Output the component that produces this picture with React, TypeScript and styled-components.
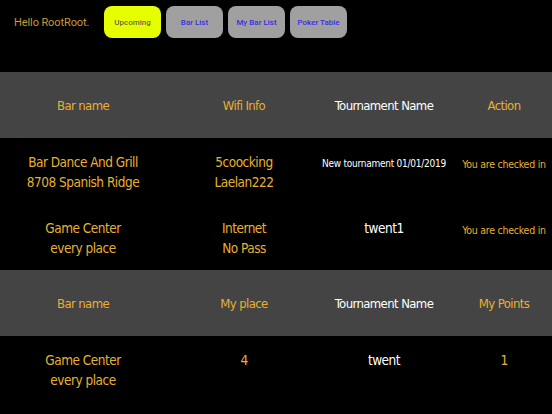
import React from 'react';
import styled, { createGlobalStyle } from 'styled-components';

const GlobalStyle = createGlobalStyle`
  html, body {
    margin: 0;
    padding: 0;
    background: #000;
  }
  body {
    font-family: "DejaVu Sans Condensed", "Liberation Sans", sans-serif;
    width: 552px;
    height: 414px;
    overflow: hidden;
  }
`;

const gold = '#e8b030';

const Page = styled.div`
  width: 552px;
  background: #000;
`;

const TopBar = styled.div`
  display: flex;
  align-items: center;
  height: 32px;
  padding: 6px 0 0 14px;
  margin-bottom: 34px;
`;

const Hello = styled.span`
  color: #c99a3a;
  font-family: Roboto, "Liberation Sans", sans-serif;
  font-size: 11px;
  letter-spacing: -0.1px;
  width: 90px;
`;

const NavButtons = styled.div`
  display: flex;
  gap: 5px;
`;

const NavButton = styled.button<{ $active?: boolean }>`
  width: 57px;
  height: 32px;
  border: none;
  border-radius: 8px;
  padding: 0;
  font-family: Roboto, "Liberation Sans", sans-serif;
  font-weight: 500;
  font-size: 8px;
  background: ${p => (p.$active ? '#e5ff00' : '#a0a0a0')};
  color: ${p => (p.$active ? '#6a6a4a' : '#3a2fe0')};
`;

const Table = styled.div`
  display: grid;
  grid-template-columns: 166px 156px 124px 106px;
`;

const HeadCell = styled.div<{ $white?: boolean; $last?: boolean }>`
  height: 66px;
  background: #444;
  display: flex;
  align-items: center;
  justify-content: center;
  box-sizing: border-box;
  padding-left: ${p => (p.$last ? '10px' : '0')};
  font-size: 13px;
  letter-spacing: -0.6px;
  color: ${p => (p.$white ? '#fff' : gold)};
  white-space: nowrap;
`;

const Cell = styled.div<{ $white?: boolean; $small?: number; $last?: boolean }>`
  height: 66px;
  box-sizing: border-box;
  padding-top: ${p => (p.$small ? '19px' : '14px')};
  padding-left: ${p => (p.$last ? '10px' : '0')};
  text-align: center;
  font-size: ${p => (p.$small ? `${p.$small}px` : '13.5px')};
  letter-spacing: ${p => (p.$small ? '-0.25px' : '-0.5px')};
  line-height: ${p => (p.$small ? '14px' : '20px')};
  color: ${p => (p.$white ? '#fff' : gold)};
  white-space: nowrap;
`;

type Row = { cells: string[][] };

const upcoming: Row[] = [
  { cells: [['Bar Dance And Grill', '8708 Spanish Ridge'], ['5coocking', 'Laelan222'], ['New tournament 01/01/2019'], ['You are checked in']] },
  { cells: [['Game Center', 'every place'], ['Internet', 'No Pass'], ['twent1'], ['You are checked in']] },
];

const results: Row[] = [
  { cells: [['Game Center', 'every place'], ['4'], ['twent'], ['1']] },
];

function Section({ headers, rows, smallSize }: { headers: string[]; rows: Row[]; smallSize: (r: Row, i: number) => number }) {
  return (
    <Table>
      {headers.map((h, i) => (
        <HeadCell key={h} $white={i === 2} $last={i === 3}>{h}</HeadCell>
      ))}
      {rows.map((row, r) =>
        row.cells.map((lines, i) => (
          <Cell key={`${r}-${i}`} $white={i === 2} $last={i === 3} $small={smallSize(row, i)}>
            {lines.map(l => <div key={l}>{l}</div>)}
          </Cell>
        ))
      )}
    </Table>
  );
}

export default function App() {
  return (
    <Page>
      <GlobalStyle />
      <TopBar>
        <Hello>Hello RootRoot.</Hello>
        <NavButtons>
          <NavButton $active>Upcoming</NavButton>
          <NavButton>Bar List</NavButton>
          <NavButton>My Bar List</NavButton>
          <NavButton>Poker Table</NavButton>
        </NavButtons>
      </TopBar>
      <Section
        headers={['Bar name', 'Wifi Info', 'Tournament Name', 'Action']}
        rows={upcoming}
        smallSize={(row, i) => (i === 3 ? 10.5 : i === 2 && row.cells[2][0].length > 12 ? 10 : 0)}
      />
      <Section
        headers={['Bar name', 'My place', 'Tournament Name', 'My Points']}
        rows={results}
        smallSize={() => 0}
      />
    </Page>
  );
}
